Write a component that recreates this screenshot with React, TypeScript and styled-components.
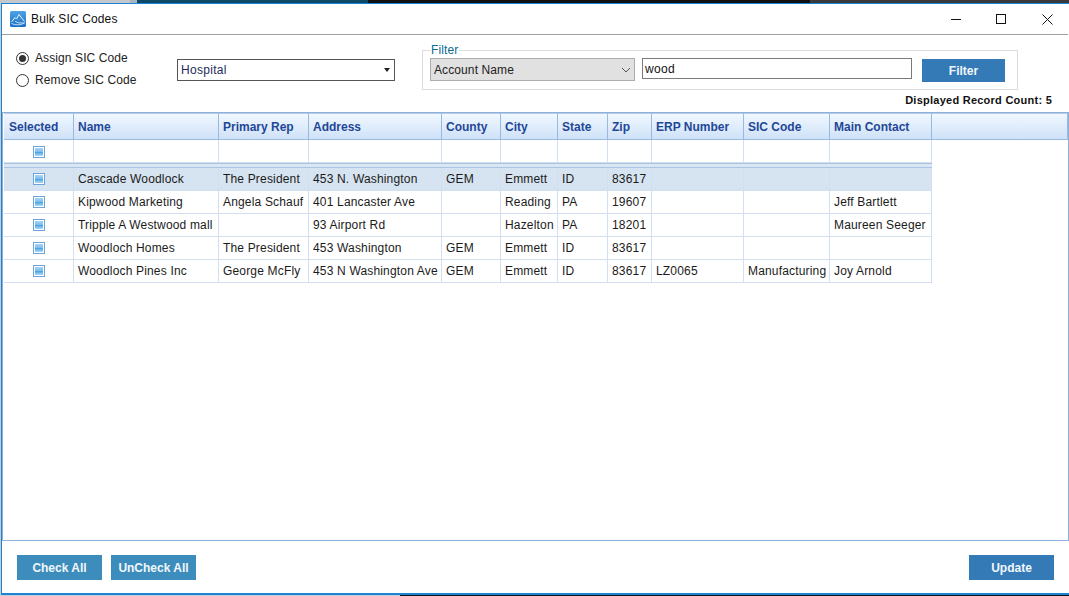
import React from "react";
import styled, { createGlobalStyle } from "styled-components";

const Global = createGlobalStyle`
  html, body { margin: 0; padding: 0; background: #fff; overflow: hidden; }
  body { font-family: "Liberation Sans", Arial, sans-serif; font-size: 12px; }
  * { box-sizing: border-box; }
`;

const Page = styled.div`
  width: 1069px;
  height: 596px;
  display: flex;
  flex-direction: column;
  background: linear-gradient(90deg, #c9ccd0 0 400px, #111 400px);
  overflow: hidden;
`;
const Strip = styled.div`
  height: 3px;
  display: flex;
  flex: none;
`;
const StripPart = styled.div<{ $w: number; $c: string }>`
  width: ${(p) => p.$w}px;
  background: ${(p) => p.$c};
`;
const Win = styled.div`
  margin-left: 1px;
  width: 1068px;
  height: 592px;
  flex: none;
  background: #fff;
  border-top: 1px solid #1883d7;
  border-left: 1px solid #1883d7;
  border-bottom: 2px solid #1883d7;
  display: flex;
  flex-direction: column;
`;
const TitleBar = styled.div`
  height: 31px;
  flex: none;
  display: flex;
  align-items: center;
  padding-left: 8px;
  border-bottom: 1px solid #a0a0a0;
  margin-right: 1px;
`;
const TitleText = styled.span`
  margin-left: 5px;
  font-size: 12px;
  color: #111;
  letter-spacing: 0.13px;
`;
const WinButtons = styled.div`
  margin-left: auto;
  display: flex;
`;
const WinButton = styled.div<{ $w: number }>`
  width: ${(p) => p.$w}px;
  height: 30px;
  display: flex;
  align-items: center;
  justify-content: center;
`;
const Controls = styled.div`
  height: 77px;
  flex: none;
  display: flex;
  align-items: flex-start;
  padding: 15px 0 0 14px;
`;
const RadioGroup = styled.div`
  width: 161px;
  display: flex;
  flex-direction: column;
  gap: 8px;
  padding-top: 1px;
`;
const RadioRow = styled.label`
  display: flex;
  align-items: center;
  height: 14px;
  gap: 6px;
  color: #222;
  font-size: 12px;
  letter-spacing: 0.1px;
`;
const RadioDot = styled.span<{ $on?: boolean }>`
  width: 13px;
  height: 13px;
  border-radius: 50%;
  border: 1px solid #333;
  background: #fff;
  display: flex;
  align-items: center;
  justify-content: center;
  &::after {
    content: "";
    width: 7px;
    height: 7px;
    border-radius: 50%;
    background: ${(p) => (p.$on ? "#333" : "transparent")};
  }
`;
const Dropdown = styled.div`
  width: 218px;
  height: 22px;
  margin-top: 9px;
  border: 1px solid #555;
  display: flex;
  align-items: center;
  justify-content: space-between;
  padding: 0 4px 0 3px;
  color: #1d2a5a;
  letter-spacing: 0.3px;
`;
const Caret = styled.span`
  width: 0;
  height: 0;
  border-left: 3.5px solid transparent;
  border-right: 3.5px solid transparent;
  border-top: 4px solid #222;
`;
const RightCol = styled.div`
  margin-left: 27px;
  width: 630px;
  display: flex;
  flex-direction: column;
`;
const FilterSet = styled.fieldset`
  width: 596px;
  height: 46px;
  margin: -6px 0 0;
  padding: 1px 7px 0;
  border: 1px solid #dcdcdc;
  display: flex;
  align-items: flex-start;
`;
const FilterLegend = styled.legend`
  padding: 0 1px;
  margin-left: 0;
  color: #0b6b8e;
  font-size: 12px;
  letter-spacing: 0.1px;
  line-height: 13px;
`;
const FilterRow = styled.div`
  display: flex;
  align-items: flex-start;
`;
const FilterSelect = styled.div`
  width: 205px;
  height: 23px;
  background: #e1e1e1;
  border: 1px solid #adadad;
  display: flex;
  align-items: center;
  justify-content: space-between;
  padding: 1px 3px 0 3px;
  color: #222;
  letter-spacing: 0.1px;
`;
const FilterInput = styled.div`
  width: 270px;
  height: 21px;
  margin-left: 7px;
  border: 1px solid #7a7a7a;
  padding: 1px 2px 0;
  display: flex;
  align-items: center;
  color: #111;
  letter-spacing: 0.3px;
`;
const ActionButton = styled.div<{ $c?: string }>`
  width: 85px;
  height: 25px;
  background: ${(p) => p.$c ?? "#337ab7"};
  color: #f2f7fb;
  font-weight: bold;
  font-size: 12px;
  display: flex;
  align-items: center;
  justify-content: center;
`;
const FilterButton = styled(ActionButton)`
  width: 83px;
  height: 23px;
  margin-left: 10px;
  margin-top: 1px;
`;
const CountText = styled.div`
  width: 630px;
  margin-top: 4px;
  text-align: right;
  font-size: 11px;
  line-height: 13px;
  font-weight: bold;
  color: #111;
  letter-spacing: 0.25px;
`;
const TablePanel = styled.div`
  height: 429px;
  flex: none;
  width: 1067px;
  border: 1px solid #8db0d9;
  padding: 0 1px;
`;
const Grid = styled.table`
  width: 1064px;
  table-layout: fixed;
  border-collapse: separate;
  border-spacing: 0;
  font-size: 12px;
`;
const HeadCell = styled.th`
  height: 27px;
  padding: 0 0 0 4px;
  text-align: left;
  font-size: 12px;
  font-weight: bold;
  color: #1f4797;
  background: linear-gradient(#f0f7ff, #cfe2f8);
  border-top: 1px solid #b5cbe6;
  border-right: 1px solid #9bb9dd;
  border-bottom: 1px solid #9bb9dd;
  overflow: hidden;
  white-space: nowrap;
  &:first-child {
    padding-left: 5px;
  }
`;
const Cell = styled.td<{ $sel?: boolean }>`
  height: 23px;
  padding: 0 0 0 4px;
  color: #1b1b1b;
  background: ${(p) => (p.$sel ? "#d6e3f0" : "#fff")};
  border-right: 1px solid #d2dff0;
  border-bottom: 1px solid #d2dff0;
  white-space: nowrap;
  overflow: hidden;
  letter-spacing: 0.17px;
`;
const BoxCell = styled(Cell)<{ $lift?: boolean }>`
  padding: 0 0 ${(p) => (p.$lift ? 1 : 0)}px;
  text-align: center;
`;
const SepCell = styled.td`
  height: 5px;
  padding: 0;
  background: #dbe6f3;
  border-top: 1px solid #a9c3e2;
  border-bottom: 1px solid #a9c3e2;
`;
const Filler = styled.td`
  border: none;
`;
const CheckIcon = styled.span`
  display: inline-block;
  vertical-align: middle;
  width: 12px;
  height: 12px;
  border: 1px solid #6ea3dc;
  background: #fff;
  padding: 1px;
  &::after {
    content: "";
    display: block;
    width: 8px;
    height: 8px;
    background: linear-gradient(#a9d6f4 0, #7cc0ee 45%, #4aa5e6 55%, #b0dcf7 100%);
  }
`;
const Footer = styled.div`
  flex: 1;
  display: flex;
  align-items: flex-start;
  padding: 14px 15px 0 15px;
  gap: 9px;
`;
const Spacer = styled.div`
  flex: 1;
`;

const widths = [70, 145, 90, 133, 59, 57, 50, 44, 92, 86, 102];
const heads = ["Selected", "Name", "Primary Rep", "Address", "County", "City", "State", "Zip", "ERP Number", "SIC Code", "Main Contact"];
const rows: string[][] = [
  ["Cascade Woodlock", "The President", "453 N. Washington", "GEM", "Emmett", "ID", "83617", "", "", ""],
  ["Kipwood Marketing", "Angela Schauf", "401 Lancaster Ave", "", "Reading", "PA", "19607", "", "", "Jeff Bartlett"],
  ["Tripple A Westwood mall", "", "93 Airport Rd", "", "Hazelton", "PA", "18201", "", "", "Maureen Seeger"],
  ["Woodloch Homes", "The President", "453 Washington", "GEM", "Emmett", "ID", "83617", "", "", ""],
  ["Woodloch Pines Inc", "George McFly", "453 N Washington Ave", "GEM", "Emmett", "ID", "83617", "LZ0065", "Manufacturing", "Joy Arnold"],
];

const AppIcon = () => (
  <svg width="16" height="16" viewBox="0 0 16 16">
    <defs>
      <linearGradient id="ai" x1="0" y1="0" x2="0" y2="1">
        <stop offset="0" stopColor="#4da3e6" />
        <stop offset="1" stopColor="#1c6fc4" />
      </linearGradient>
    </defs>
    <rect width="16" height="16" rx="1.5" fill="url(#ai)" />
    <path d="M1.5 11 L5 6.5 L6.5 8 L9 3.5 L14.5 10.5" fill="none" stroke="#e8f4ff" strokeWidth="1" />
    <path d="M1.5 12.5 Q8 15.5 14.5 12 Q8 12.5 5 10.5" fill="none" stroke="#cfe7fb" strokeWidth="0.9" />
  </svg>
);
const Chevron = () => (
  <svg width="10" height="6" viewBox="0 0 10 6">
    <path d="M1 1 L5 5 L9 1" fill="none" stroke="#555" strokeWidth="1" />
  </svg>
);

export default function App() {
  return (
    <Page>
      <Global />
      <Strip>
        <StripPart $w={130} $c="#c4c7cb" />
        <StripPart $w={7} $c="#aab3c0" />
        <StripPart $w={231} $c="#0d4a66" />
        <StripPart $w={442} $c="#111" />
        <StripPart $w={259} $c="#3a3a3c" />
      </Strip>
      <Win>
        <TitleBar>
          <AppIcon />
          <TitleText>Bulk SIC Codes</TitleText>
          <WinButtons>
            <WinButton $w={40}>
              <svg width="10" height="10" viewBox="0 0 10 10"><path d="M0 5.5H10" stroke="#111" strokeWidth="1" /></svg>
            </WinButton>
            <WinButton $w={50}>
              <svg width="10" height="10" viewBox="0 0 10 10"><rect x="0.5" y="0.5" width="9" height="9" fill="none" stroke="#111" /></svg>
            </WinButton>
            <WinButton $w={42}>
              <svg width="11" height="11" viewBox="0 0 11 11"><path d="M0.5 0.5L10.5 10.5M10.5 0.5L0.5 10.5" stroke="#111" strokeWidth="1" /></svg>
            </WinButton>
          </WinButtons>
        </TitleBar>
        <Controls>
          <RadioGroup>
            <RadioRow><RadioDot $on />Assign SIC Code</RadioRow>
            <RadioRow><RadioDot />Remove SIC Code</RadioRow>
          </RadioGroup>
          <Dropdown>Hospital<Caret /></Dropdown>
          <RightCol>
            <FilterSet>
              <FilterLegend>Filter</FilterLegend>
              <FilterRow>
                <FilterSelect>Account Name<Chevron /></FilterSelect>
                <FilterInput>wood</FilterInput>
                <FilterButton>Filter</FilterButton>
              </FilterRow>
            </FilterSet>
            <CountText>Displayed Record Count: 5</CountText>
          </RightCol>
        </Controls>
        <TablePanel>
          <Grid>
            <colgroup>
              {widths.map((w, i) => <col key={i} style={{ width: w }} />)}
              <col />
            </colgroup>
            <thead>
              <tr>
                {heads.map((h) => <HeadCell key={h}>{h}</HeadCell>)}
                <HeadCell />
              </tr>
            </thead>
            <tbody>
              <tr>
                <BoxCell><CheckIcon /></BoxCell>
                {heads.slice(1).map((h) => <Cell key={h} />)}
                <Filler />
              </tr>
              <tr>
                <SepCell colSpan={11} />
                <Filler />
              </tr>
              {rows.map((r, i) => (
                <tr key={i}>
                  <BoxCell $lift $sel={i === 0}><CheckIcon /></BoxCell>
                  {r.map((c, j) => <Cell key={j} $sel={i === 0}>{c}</Cell>)}
                  <Filler />
                </tr>
              ))}
            </tbody>
          </Grid>
        </TablePanel>
        <Footer>
          <ActionButton $c="#3c8dbb">Check All</ActionButton>
          <ActionButton $c="#3c8dbb">UnCheck All</ActionButton>
          <Spacer />
          <ActionButton>Update</ActionButton>
        </Footer>
      </Win>
    </Page>
  );
}
